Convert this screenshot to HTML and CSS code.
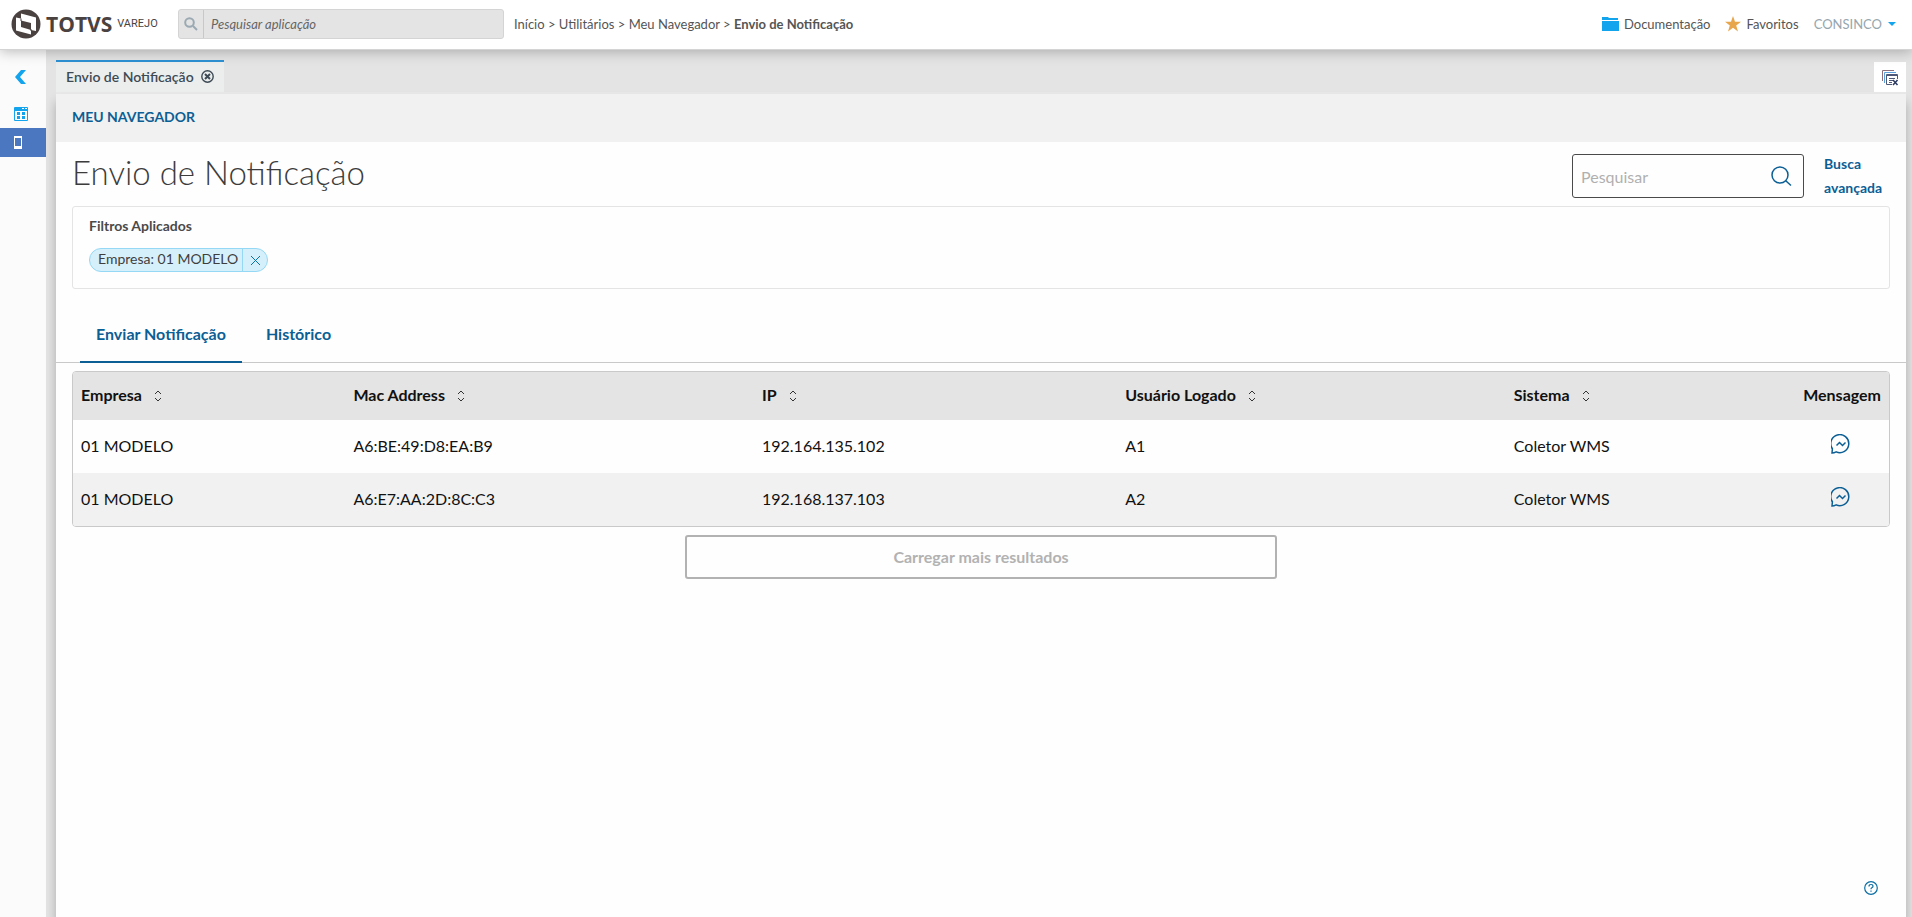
FILE: index.html
```html
<!DOCTYPE html>
<html lang="pt-BR">
<head>
<meta charset="utf-8">
<title>Envio de Notificação</title>
<link rel="stylesheet" href="styles.css">
</head>
<body>
<svg class="sprite" aria-hidden="true">
  <symbol id="sort" viewBox="0 0 8 12"><path d="M1 4l3-3 3 3M1 8l3 3 3-3"/></symbol>
  <symbol id="message" viewBox="0 0 20 20"><path d="M1 19l.4-4.200A9 9 0 1 1 5.200 17.900C4 18.500 2.500 19 1 19zM5.500 11.500l3-3 3 3 3-3"/></symbol>
</svg>
<header class="topbar">
  <div class="brand">
    <svg class="brand-mark" viewBox="0 0 30 30">
      <circle cx="15" cy="15" r="14.500" fill="#4a4240"/>
      <path d="M10 4.500l15 4v13.500l-5-1v4.500L5 21.500V8.500l5 1z" fill="#fff"/>
      <path d="M10 11.500l10 2.500v7L10 18z" fill="#4a4240"/>
      <path d="M10 9.500v2.500M20 20v2" stroke="#4a4240"/>
    </svg>
    <span class="brand-name">TOTVS</span><span class="brand-line">VAREJO</span>
  </div>
  <form class="app-search">
    <button type="button" aria-label="Pesquisar"><svg viewBox="0 0 14 14"><circle cx="5.500" cy="5.500" r="4.300"/><path d="M9 9l4 4"/></svg></button>
    <input type="text" placeholder="Pesquisar aplicação" aria-label="Pesquisar aplicação">
  </form>
  <nav class="crumbs"><a href="#">Início</a> &gt; <a href="#">Utilitários</a> &gt; <a href="#">Meu Navegador</a> &gt; <b>Envio de Notificação</b></nav>
  <div class="top-links">
    <a href="#"><svg width="17" height="14" viewBox="0 0 17 14"><path d="M0 0h6l1 1h9v2H0zM0 4h17v10H0z" fill="#13a4ee"/></svg>Documentação</a>
    <a href="#"><svg width="16" height="16" viewBox="0 0 16 16"><path d="M8 0l2 5.800h6l-4.800 3.600L13 15.500l-5-3.700-5 3.700 1.800-6.100L0 5.800h6z" fill="#e8a64c"/></svg>Favoritos</a>
    <button type="button" class="user">CONSINCO<svg width="8" height="4" viewBox="0 0 8 4"><path d="M0 0h8L4 4z" fill="#13a4ee"/></svg></button>
  </div>
</header>
<div class="shell">
  <nav class="rail">
    <button type="button" aria-label="Recolher"><svg width="11" height="14" viewBox="0 0 11 14"><path d="M6 0h5L5 7l6 7H6L0 7z" fill="#13a4ee"/></svg></button>
    <button type="button" aria-label="Aplicações"><svg width="14" height="14" viewBox="0 0 14 14"><path d="M0 1q0-1 1-1h12q1 0 1 1v12q0 1-1 1H1q-1 0-1-1z" fill="#13a4ee"/><path d="M1 4h12v9H1zM8 1h2v1H8zM11 1h2v1h-2z" fill="#fff"/><path d="M3 5h3v3H3zM8 5h3v3H8zM3 9h3v3H3zM8 9h3v3H8z" fill="#13a4ee"/></svg></button>
    <button type="button" class="active" aria-label="Meu Navegador"><svg width="8" height="13" viewBox="0 0 8 13"><path d="M0 0h8v13H0z" fill="#fff"/><path d="M1 2h6v8H1z" fill="#4a77c0"/></svg></button>
  </nav>
  <div class="workspace">
    <div class="window-tabs">
      <div class="window-tab">Envio de Notificação
        <button type="button" aria-label="Fechar aba"><svg width="13" height="13" viewBox="0 0 13 13"><circle cx="6.500" cy="6.500" r="5.700" stroke-width="1.400"/><path d="M4 4l5 5M9 4L4 9" stroke-width="2"/></svg></button>
      </div>
      <button type="button" class="close-all" aria-label="Fechar todas as abas"><svg width="18" height="17" viewBox="0 0 18 17"><path d="M1.500 12V1.500H13" stroke="#8a6f7c"/><path d="M3.500 14V3.500H15" stroke="#5aa0dc"/><path d="M11 15.500H5.500v-10h11V10M5.500 6.500h11M8 9.500h6M8 11.500h4M8 13.500h3" stroke="#505878"/><path d="M12 11l4.500 5M16.500 11L12 16" stroke="#2c3a60" stroke-width="1.500"/></svg></button>
    </div>
    <main class="panel">
      <div class="menu-bar"><a href="#">MEU NAVEGADOR</a></div>
      <div class="page-head">
        <h1>Envio de Notificação</h1>
        <form class="page-search">
          <input type="text" placeholder="Pesquisar" aria-label="Pesquisar">
          <button type="button" aria-label="Buscar"><svg width="21" height="21" viewBox="0 0 21 21"><circle cx="9" cy="9" r="8"/><path d="M14.500 14.500l5.500 5"/></svg></button>
        </form>
        <a class="advanced" href="#">Busca avançada</a>
      </div>
      <section class="filters">
        <h2>Filtros Aplicados</h2>
        <div class="chip"><span>Empresa: 01 MODELO</span><button type="button" aria-label="Remover filtro"><svg width="11" height="11" viewBox="0 0 11 11"><path d="M1 1l9 9M10 1l-9 9"/></svg></button></div>
      </section>
      <div class="tabs">
        <button type="button" class="selected">Enviar Notificação</button>
        <button type="button">Histórico</button>
      </div>
      <div class="table-box">
        <table>
          <colgroup><col class="c-company"><col class="c-mac"><col class="c-ip"><col class="c-user"><col class="c-system"><col></colgroup>
          <thead><tr>
            <th>Empresa<svg class="sort"><use href="#sort"/></svg></th>
            <th>Mac Address<svg class="sort"><use href="#sort"/></svg></th>
            <th>IP<svg class="sort"><use href="#sort"/></svg></th>
            <th>Usuário Logado<svg class="sort"><use href="#sort"/></svg></th>
            <th>Sistema<svg class="sort"><use href="#sort"/></svg></th>
            <th class="msg">Mensagem</th>
          </tr></thead>
          <tbody>
            <tr><td>01 MODELO</td><td>A6:BE:49:D8:EA:B9</td><td>192.164.135.102</td><td>A1</td><td>Coletor WMS</td><td class="msg"><button type="button" aria-label="Enviar mensagem"><svg><use href="#message"/></svg></button></td></tr>
            <tr><td>01 MODELO</td><td>A6:E7:AA:2D:8C:C3</td><td>192.168.137.103</td><td>A2</td><td>Coletor WMS</td><td class="msg"><button type="button" aria-label="Enviar mensagem"><svg><use href="#message"/></svg></button></td></tr>
          </tbody>
        </table>
      </div>
      <button type="button" class="load-more" disabled>Carregar mais resultados</button>
      <button type="button" class="help" aria-label="Ajuda"><svg width="14" height="14" viewBox="0 0 14 14"><circle cx="7" cy="7" r="6.300"/><path d="M5 5.500q0-2 2-2t2 1.700q0 1-1.200 1.600Q7 7.200 7 8.300M7 9.500v1.300"/></svg></button>
    </main>
  </div>
</div>
</body>
</html>
```
FILE: styles.css
```css
* { box-sizing: border-box; }
body {
  margin: 0;
  min-height: 100vh;
  display: flex;
  flex-direction: column;
  font-family: Lato, "Open Sans", sans-serif;
  font-size: 16px;
  color: #111;
}
button { border: 0; padding: 0; background: none; font: inherit; color: inherit; display: inline-flex; align-items: center; justify-content: center; }
input { font: inherit; min-width: 0; border: 0; outline: 0; background: none; }
a { color: inherit; text-decoration: none; }
svg { fill: none; flex: none; }
.sprite { position: absolute; width: 0; height: 0; }

.topbar {
  position: relative;
  z-index: 2;
  display: flex;
  align-items: center;
  height: 50px;
  padding: 0 16px 2px 11px;
  background: #fff;
  border-bottom: 1px solid #d4d4d4;
  box-shadow: 0 2px 12px rgba(0, 0, 0, .25);
  font-size: 13px;
  color: #555;
}
.brand { display: flex; align-items: center; width: 167px; color: #4a4240; }
.brand-mark { width: 30px; height: 30px; }
.brand-name { margin: 0 5px 0 5px; font: 700 21px/30px "Open Sans", sans-serif; }
.brand-line { font: 400 11px/28px Roboto, sans-serif; }
.app-search { display: flex; width: 326px; height: 30px; margin-right: 10px; background: #e4e4e4; border: 1px solid #d4d4d4; border-radius: 3px; }
.app-search button { width: 25px; border-right: 1px solid #c8c8c8; }
.app-search svg { width: 14px; height: 14px; stroke: #9aa9b2; stroke-width: 2; }
.app-search input { flex: 1; padding: 0 7px; font-style: italic; }
.app-search input::placeholder { color: #666; opacity: 1; }
.top-links { display: flex; align-items: center; gap: 15px; margin-left: auto; }
.top-links a { display: flex; align-items: center; gap: 5px; }
.top-links .user { gap: 6px; color: #96a6ae; }

.shell { flex: 1; display: flex; background: #e4e4e4; }
.rail { width: 46px; background: #fbfbfb; padding-top: 12px; display: flex; flex-direction: column; }
.rail button { height: 29px; padding-right: 5px; }
.rail button:first-child { margin-bottom: 8px; }
.rail button.active { background: #4a77c0; padding-right: 10px; }
.workspace { flex: 1; min-width: 0; display: flex; flex-direction: column; padding: 10px 6px 0 10px; }
.window-tabs { display: flex; justify-content: space-between; align-items: flex-end; height: 34px; border-bottom: 2px solid #e9e9e9; }
.window-tab { display: flex; align-items: center; gap: 7px; height: 32px; padding: 0 10px 2px; border-top: 2px solid #2d91d3; background: #eceeed; font-size: 14px; font-weight: 600; color: #3d4a54; }
.window-tab svg { stroke: #3d4a54; }
.close-all { width: 32px; height: 30px; background: #fff; }

.panel { position: relative; flex: 1; display: flex; flex-direction: column; background: #fefefe; box-shadow: 0 8px 10px rgba(0, 0, 0, .25); }
.menu-bar { height: 48px; padding: 0 16px 4px; display: flex; align-items: center; background: #f1f1f1; font-size: 14px; font-weight: 700; color: #0c5f95; }
.page-head { display: flex; align-items: center; height: 64px; padding: 4px 16px 0; }
h1 { margin: 0 auto 0 0; padding-bottom: 8px; font-size: 33px; font-weight: 300; color: #3c3c3c; }
.page-search { display: flex; align-items: center; width: 232px; height: 44px; margin-right: 20px; padding-right: 11px; border: 1px solid #4a4a4a; border-radius: 3px; }
.page-search input { flex: 1; padding: 0 8px; }
.page-search input::placeholder { color: #b0b0b0; opacity: 1; }
.page-search svg { stroke: #0c5f95; stroke-width: 1.500; }
.advanced { width: 66px; font-size: 14px; line-height: 24px; font-weight: 700; color: #0c5f95; }
.filters { height: 83px; margin: 0 16px; padding: 9px 16px; border: 1px solid #e4e4e4; border-radius: 3px; }
h2 { margin: 0 0 12px; font-size: 14px; line-height: 20px; font-weight: 700; color: #4a4a4a; }
.chip { display: inline-flex; height: 24px; border: 1px solid #94d8f5; border-radius: 12px; background: #d6f0fb; font-size: 14px; line-height: 20px; color: #3f3f3f; }
.chip span { padding: 0 4px 0 8px; }
.chip button { width: 25px; border-left: 1px solid #94d8f5; }
.chip svg { stroke: #0c6fa5; }
.tabs { display: flex; gap: 8px; margin-top: 17px; padding: 0 24px; border-bottom: 1px solid #c9c9c9; }
.tabs button { height: 57px; margin-bottom: -1px; padding: 0 16px; border-bottom: 2px solid transparent; font-weight: 700; color: #0c5f95; }
.tabs .selected { border-color: #0c5f95; }
.table-box { margin: 8px 16px 0; border: 1px solid #c9c9c9; border-radius: 4px; overflow: hidden; }
table { width: 100%; table-layout: fixed; border-collapse: collapse; }
.c-company { width: 15%; }
.c-mac { width: 22.5%; }
.c-ip { width: 20%; }
.c-user { width: 21.4%; }
.c-system { width: 15.8%; }
th, td { padding: 0 8px 3px; text-align: left; white-space: nowrap; }
th { height: 48px; background: #e4e4e4; font-weight: 700; }
td { height: 53px; }
tbody tr:nth-child(even) { background: #f1f1f1; }
.sort { width: 8px; height: 12px; margin-left: 12px; vertical-align: -1px; stroke: #333; }
.msg { text-align: center; }
th.msg { text-align: right; }
.msg svg { width: 20px; height: 20px; stroke: #0c5f95; stroke-width: 1.5; }
.load-more { align-self: center; width: 32%; height: 44px; margin-top: 8px; padding-bottom: 2px; border: 2px solid #b2b2b2; border-radius: 3px; font-weight: 700; color: #b2b2b2; }
.help { position: absolute; right: 28px; bottom: 22px; }
.help svg { stroke: #0c6fa5; stroke-width: 1.2; }
```
